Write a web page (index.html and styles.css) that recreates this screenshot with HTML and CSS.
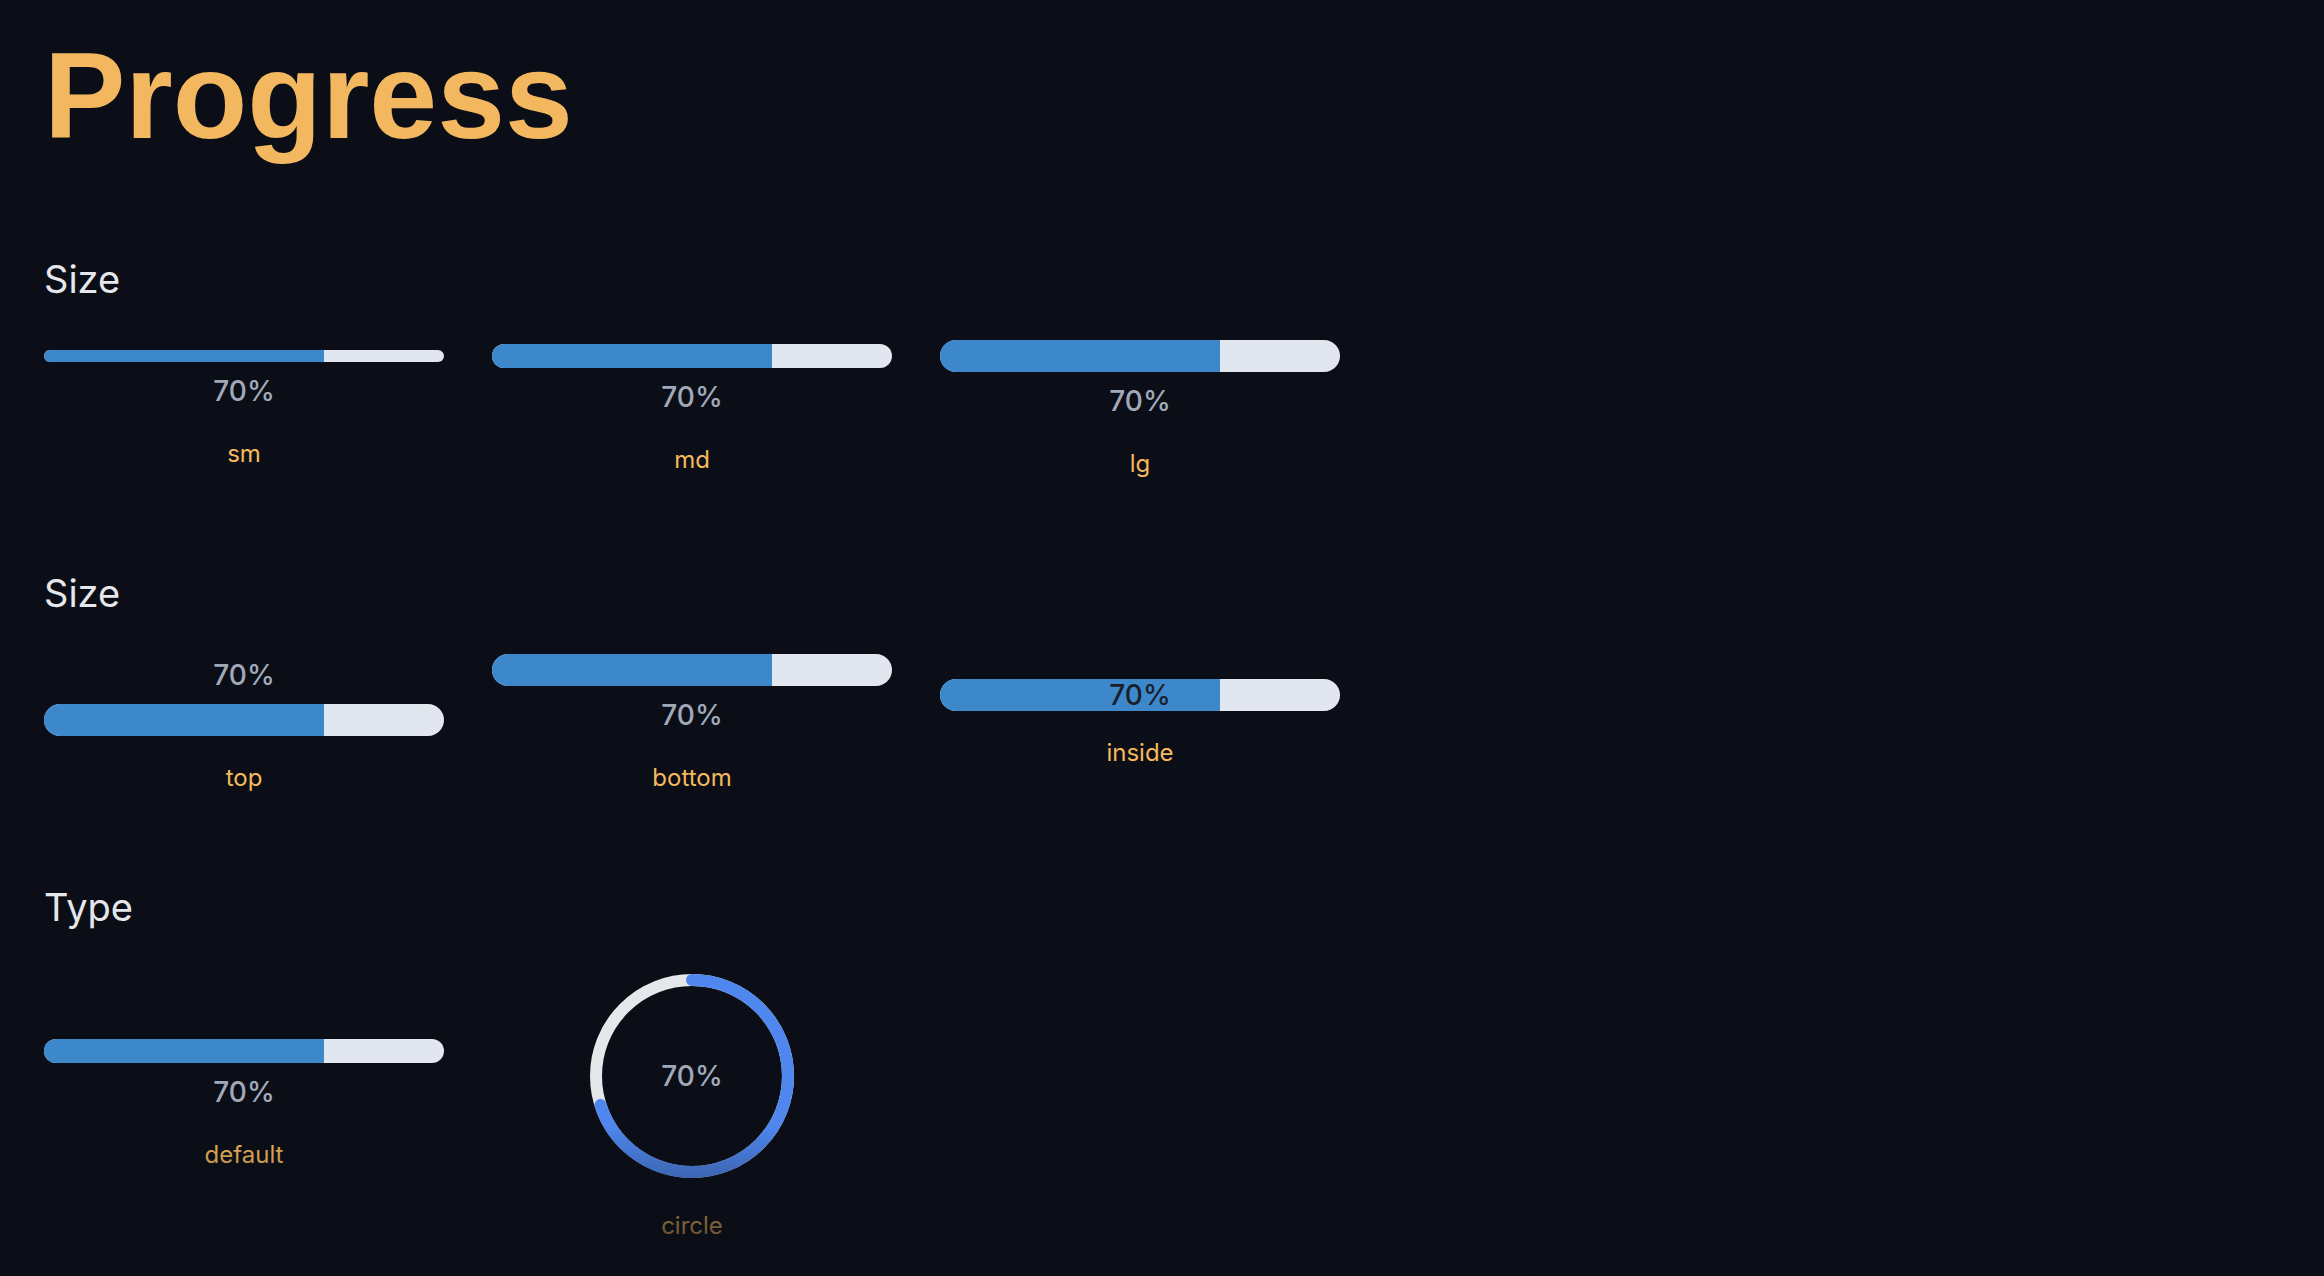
FILE: index.html
```html
<!DOCTYPE html>
<html lang="en">
<head>
<meta charset="utf-8">
<title>Progress</title>
<link rel="stylesheet" href="styles.css">
</head>
<body>
<div class="page">
  <h1 class="title">Progress</h1>

  <section class="section">
    <h2 class="section-title">Size</h2>
    <div class="row">
      <div class="demo">
        <div class="progress">
          <div class="track sm"><div class="fill" style="width:70%"></div></div>
          <div class="value">70%</div>
        </div>
        <div class="label">sm</div>
      </div>
      <div class="demo">
        <div class="progress">
          <div class="track md"><div class="fill" style="width:70%"></div></div>
          <div class="value">70%</div>
        </div>
        <div class="label">md</div>
      </div>
      <div class="demo">
        <div class="progress">
          <div class="track lg"><div class="fill" style="width:70%"></div></div>
          <div class="value">70%</div>
        </div>
        <div class="label">lg</div>
      </div>
    </div>
  </section>

  <section class="section">
    <h2 class="section-title">Size</h2>
    <div class="row">
      <div class="demo">
        <div class="progress">
          <div class="value">70%</div>
          <div class="track lg"><div class="fill" style="width:70%"></div></div>
        </div>
        <div class="label">top</div>
      </div>
      <div class="demo">
        <div class="progress">
          <div class="track lg"><div class="fill" style="width:70%"></div></div>
          <div class="value">70%</div>
        </div>
        <div class="label">bottom</div>
      </div>
      <div class="demo">
        <div class="progress">
          <div class="track lg inside">
            <div class="fill" style="width:70%"></div>
            <div class="value-inside">70%</div>
          </div>
        </div>
        <div class="label">inside</div>
      </div>
    </div>
  </section>

  <section class="section">
    <h2 class="section-title">Type</h2>
    <div class="row">
      <div class="demo">
        <div class="progress">
          <div class="track md"><div class="fill" style="width:70%"></div></div>
          <div class="value">70%</div>
        </div>
        <div class="label">default</div>
      </div>
      <div class="demo">
        <div class="circle-wrap">
          <svg class="circle-svg" width="216" height="216" viewBox="0 0 216 216">
            <circle cx="108" cy="108" r="96" fill="none" stroke="#e5e7eb" stroke-width="12"/>
            <circle cx="108" cy="108" r="96" fill="none" stroke="#4f87ee" stroke-width="12" stroke-linecap="round" stroke-dasharray="422.23 603.19" transform="rotate(-90 108 108)"/>
          </svg>
          <div class="value circle-value">70%</div>
        </div>
        <div class="label">circle</div>
      </div>
    </div>
  </section>
</div>
<div class="fade"></div>
</body>
</html>
```
FILE: styles.css
```css
html, body {
  margin: 0;
  background: #0b0e17;
}

body {
  font-family: Inter, "Noto Sans", "Liberation Sans", sans-serif;
  min-height: 100vh;
}

.page {
  padding: 24px 44px;
}

.title {
  margin: 0;
  font-family: "Liberation Sans", Arial, sans-serif;
  font-weight: 700;
  font-size: 122px;
  line-height: 144px;
  color: #f3b760;
}

.section {
  margin-top: 84px;
}

.section-title {
  margin: 0;
  font-weight: 400;
  font-size: 38px;
  line-height: 54px;
  color: #e5e7eb;
}

.row {
  display: flex;
  align-items: center;
  gap: 48px;
  margin-top: 34px;
}

.demo {
  width: 400px;
  display: flex;
  flex-direction: column;
  align-items: center;
}

.progress {
  width: 100%;
  display: flex;
  flex-direction: column;
  align-items: center;
  gap: 8px;
}

.track {
  width: 100%;
  display: flex;
  background: #e2e6ee;
  border-radius: 999px;
  overflow: hidden;
}

.track.sm { height: 12px; }
.track.md { height: 24px; }
.track.lg { height: 32px; }

.fill {
  height: 100%;
  background: #3d88cb;
}

.value {
  font-size: 28px;
  font-weight: 500;
  line-height: 42px;
  color: #a1a9b9;
}

.track.inside {
  display: grid;
}

.track.inside > .fill,
.track.inside > .value-inside {
  grid-area: 1 / 1;
}

.track.inside > .fill {
  justify-self: start;
}

.value-inside {
  justify-self: center;
  font-size: 28px;
  font-weight: 500;
  line-height: 32px;
  color: #1a1f2b;
}

.label {
  margin-top: 24px;
  font-size: 24px;
  line-height: 36px;
  color: #f5b95c;
}

.circle-wrap {
  display: grid;
  width: 216px;
  height: 216px;
}

.circle-wrap > .circle-svg,
.circle-wrap > .circle-value {
  grid-area: 1 / 1;
  place-self: center;
}

.circle-svg {
  display: block;
}

.fade {
  position: fixed;
  left: 0;
  right: 0;
  bottom: 0;
  height: 150px;
  background: linear-gradient(to bottom, rgba(11, 14, 23, 0), rgba(11, 14, 23, 0.8));
  pointer-events: none;
}
```
